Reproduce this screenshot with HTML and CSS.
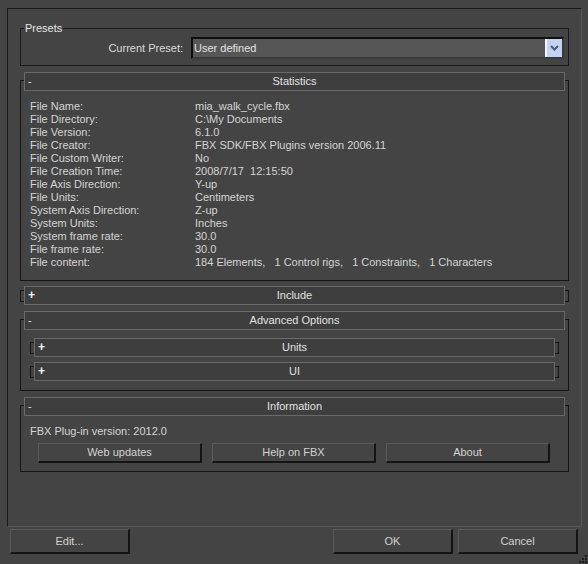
FILE: index.html
```html
<!DOCTYPE html>
<html lang="en">
<head>
  <meta charset="UTF-8">
  <title>FBX Import</title>
  <link rel="stylesheet" href="styles.css">
</head>
<body>
  <div class="panel">
    <fieldset class="presets">
      <legend>Presets</legend>
      <div class="preset-row">
        <label class="preset-label">Current Preset:</label>
        <div class="combo">
          <span class="combo-text">User defined</span>
          <span class="combo-btn">
            <svg width="9" height="6" viewBox="0 0 9 6"><path d="M1 1 L4.5 4.5 L8 1" fill="none" stroke="#4b5872" stroke-width="2"/></svg>
          </span>
        </div>
      </div>
    </fieldset>

    <div class="rollout open">
      <div class="rollout-head"><span class="sign">-</span><span class="title">Statistics</span></div>
      <div class="stats">
        <span>File Name:</span><span>mia_walk_cycle.fbx</span>
        <span>File Directory:</span><span>C:\My Documents</span>
        <span>File Version:</span><span>6.1.0</span>
        <span>File Creator:</span><span>FBX SDK/FBX Plugins version 2006.11</span>
        <span>File Custom Writer:</span><span>No</span>
        <span>File Creation Time:</span><span>2008/7/17&nbsp; 12:15:50</span>
        <span>File Axis Direction:</span><span>Y-up</span>
        <span>File Units:</span><span>Centimeters</span>
        <span>System Axis Direction:</span><span>Z-up</span>
        <span>System Units:</span><span>Inches</span>
        <span>System frame rate:</span><span>30.0</span>
        <span>File frame rate:</span><span>30.0</span>
        <span>File content:</span><span>184 Elements,&nbsp;&nbsp; 1 Control rigs,&nbsp;&nbsp; 1 Constraints,&nbsp;&nbsp; 1 Characters</span>
      </div>
    </div>

    <div class="rollout closed">
      <div class="rollout-head"><span class="sign plus">+</span><span class="title">Include</span></div>
    </div>

    <div class="rollout open advanced">
      <div class="rollout-head"><span class="sign">-</span><span class="title">Advanced Options</span></div>
      <div class="rollout closed sub">
        <div class="rollout-head"><span class="sign plus">+</span><span class="title">Units</span></div>
      </div>
      <div class="rollout closed sub">
        <div class="rollout-head"><span class="sign plus">+</span><span class="title">UI</span></div>
      </div>
    </div>

    <div class="rollout open info">
      <div class="rollout-head"><span class="sign">-</span><span class="title">Information</span></div>
      <div class="info-body">
        <div class="version">FBX Plug-in version: 2012.0</div>
        <div class="info-buttons">
          <button class="btn">Web updates</button>
          <button class="btn">Help on FBX</button>
          <button class="btn">About</button>
        </div>
      </div>
    </div>
  </div>

  <div class="footer">
    <button class="btn big">Edit...</button>
    <span class="spacer"></span>
    <button class="btn big">OK</button>
    <button class="btn big">Cancel</button>
  </div>

  <svg class="grip" width="9" height="9" viewBox="0 0 9 9">
    <rect x="6" y="0" width="2" height="2" fill="#1c1c1c"/>
    <rect x="3" y="3" width="2" height="2" fill="#1c1c1c"/>
    <rect x="6" y="3" width="2" height="2" fill="#1c1c1c"/>
    <rect x="0" y="6" width="2" height="2" fill="#1c1c1c"/>
    <rect x="3" y="6" width="2" height="2" fill="#1c1c1c"/>
    <rect x="6" y="6" width="2" height="2" fill="#1c1c1c"/>
  </svg>
</body>
</html>
```

FILE: styles.css
```css
* {
  margin: 0; padding: 0;
  box-sizing: border-box;
  font-family: "Liberation Sans", Arial, sans-serif;
}
body {
  background: #444444; color: #d6d6d6;
  font-size: 11px; line-height: 13px;
  width: 588px; height: 564px;
  overflow: hidden; position: relative;
}

/* main panel */
.panel {
  margin: 8px 6px 0 7px; height: 519px;
  border: 1px solid; border-color: #1a1a1a #575757 #575757 #1a1a1a;
  padding: 13px 12px 0 12px;
}

/* presets group */
.presets { border: 1px solid #1a1a1a; padding: 2px 4px 6px 0; }
.presets legend { margin-left: 3px; padding: 0 1px; color: #e6e6e6; line-height: 13px; }
.preset-row {
  display: grid; grid-template-columns: 162px 373px;
  gap: 8px; align-items: center;
}
.preset-label { text-align: right; color: #dadada; }
.combo {
  height: 22px; background: #565656;
  border-style: solid; border-width: 2px 2px 2px 2px;
  border-color: #0f0f0f #3a3a3a #3a3a3a #0f0f0f;
  display: flex; align-items: center;
}
.combo-text { flex: 1; padding-left: 1px; color: #e4e4e4; }
.combo-btn {
  width: 17px; height: 18px;
  background: #c2d3f6; border-left: 2px solid #f4f7ff;
  display: flex; align-items: center; justify-content: center;
}

/* rollouts */
.rollout { border: 1px solid #161616; }
.rollout.open { margin-top: 14px; }
.rollout.closed { margin-top: 9px; height: 12px; }
.rollout.closed + .rollout.open { margin-top: 17px; }
.rollout-head {
  height: 19px; margin: -9px 3px 0 3px;
  border: 1px solid #6a6a6a; background: #3e3e3e;
  display: grid; grid-template-columns: 1fr auto 1fr;
  align-items: center; line-height: 17px; color: #e2e2e2;
}
.rollout.open > .rollout-head { margin-bottom: -1px; }
.rollout.closed .rollout-head { margin-top: -5px; }
.sign { padding-left: 3px; font-size: 11px; }
.sign.plus { padding-left: 3px; font-weight: bold; font-size: 12px; color: #f4f4f4; }
.title { text-align: center; }

.stats {
  display: grid; grid-template-columns: 165px 1fr;
  padding: 10px 8px 11px 9px; color: #d4d4d4;
}

.advanced { padding-bottom: 12px; }
.rollout.sub { margin: 13px 9px 0 9px; }
.rollout.sub + .rollout.sub { margin-top: 12px; }

.info-body { padding: 10px 0 8px 9px; }
.version { color: #d4d4d4; }
.info-buttons { display: flex; gap: 10px; margin-top: 5px; padding-left: 8px; }

/* buttons */
.btn {
  width: 164px; height: 20px;
  background: #444444; color: #d2d2d2;
  font-family: inherit; font-size: 11px; line-height: 14px;
  padding-bottom: 1px;
  border-style: solid; border-width: 1px 2px 2px 1px;
  border-color: #5a5a5a #141414 #141414 #5a5a5a;
}
.btn.big { width: 120px; height: 25px; }

.footer { display: flex; gap: 5px; padding: 2px 10px 0 10px; }
.spacer { flex: 1; }

.grip { position: absolute; right: 0; bottom: 0; }
```
